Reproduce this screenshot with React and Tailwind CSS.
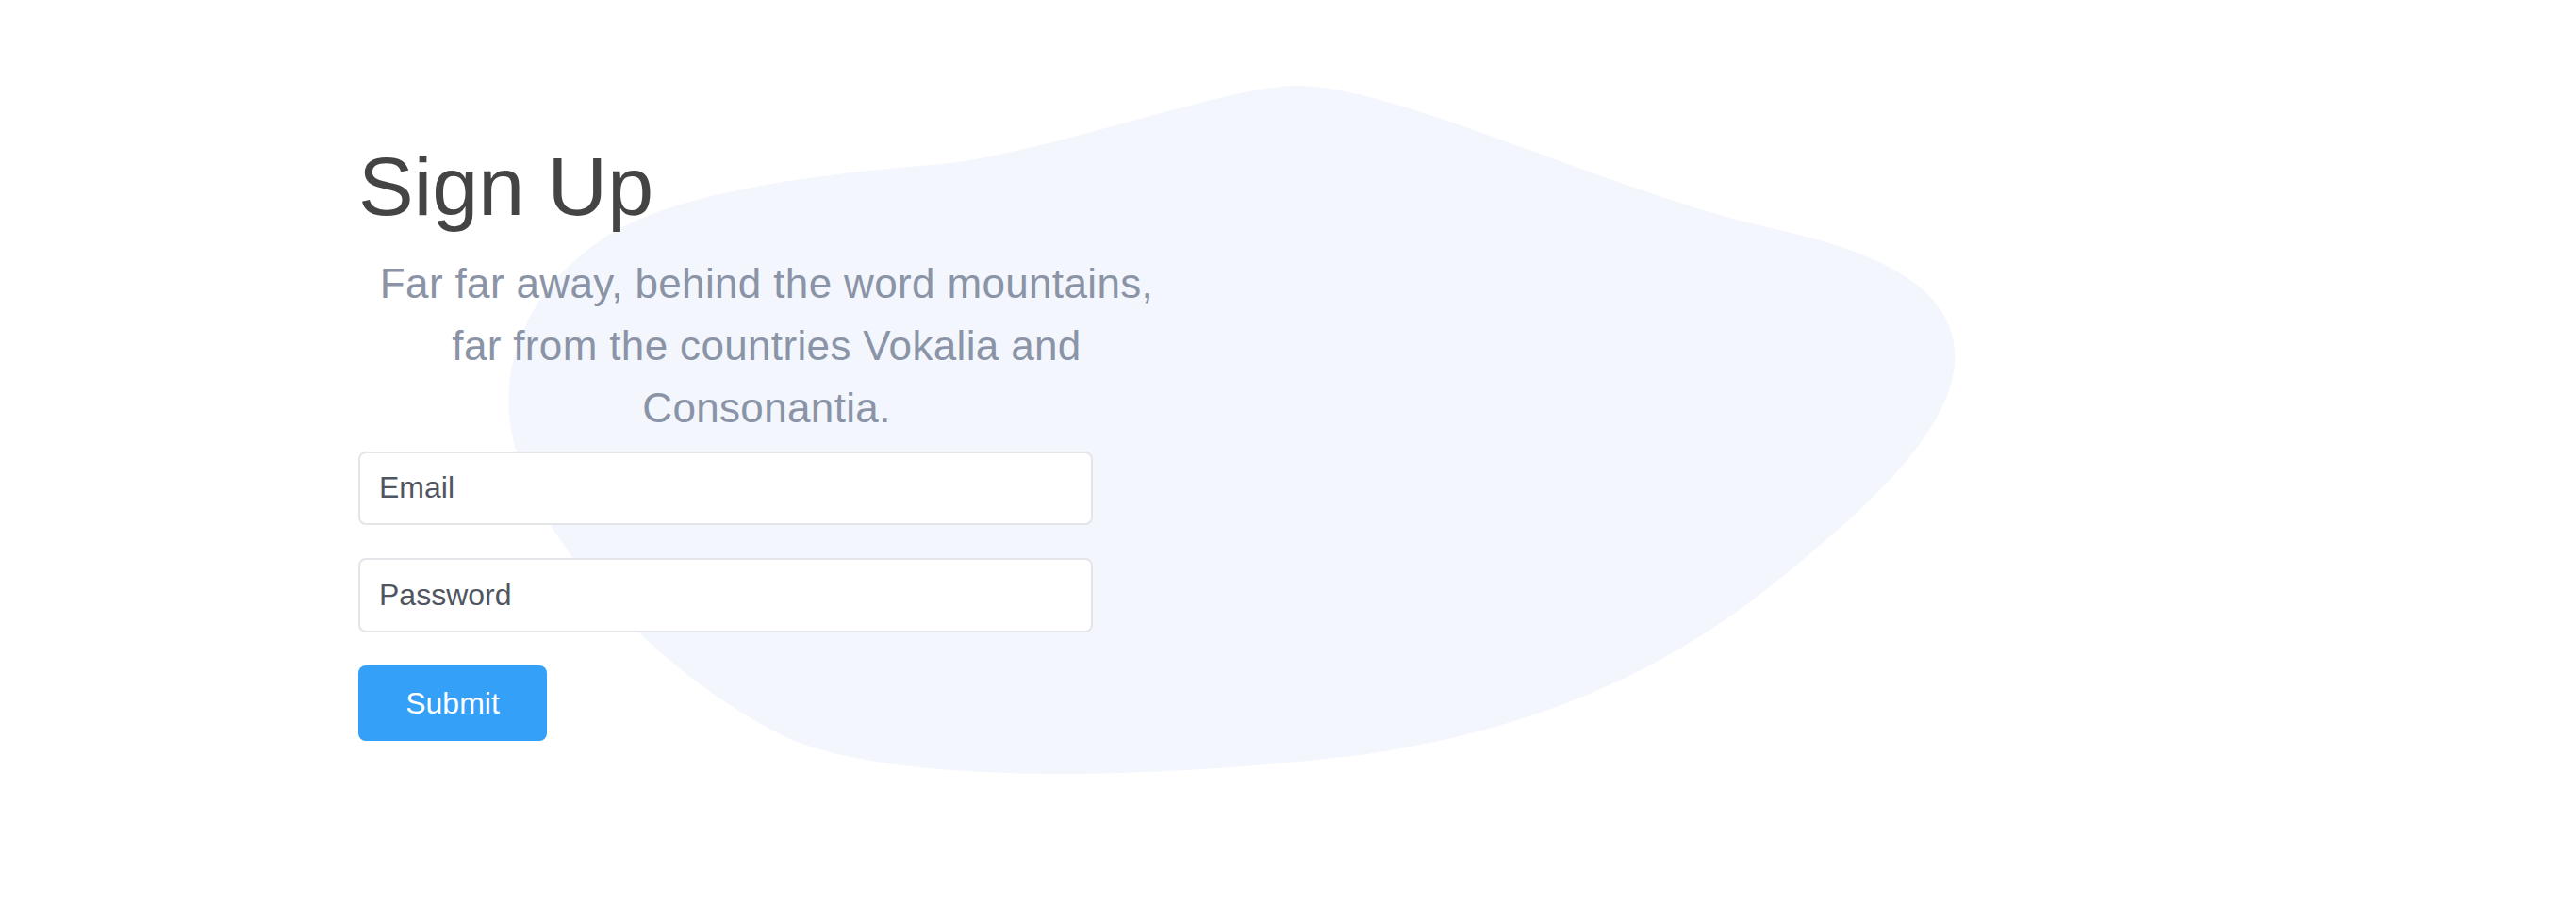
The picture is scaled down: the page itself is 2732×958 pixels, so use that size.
import React from 'react';

const Blob = () => (
  <svg
    className="absolute left-0 top-0 pointer-events-none"
    width="2732"
    height="958"
    viewBox="0 0 2732 958"
    aria-hidden="true"
  >
    <path
      fill="#f3f6fd"
      d="M 1376 91
         C 1300 91, 1120 160, 1000 174
         C 860 185, 700 205, 630 260
         C 560 310, 535 380, 540 440
         C 550 560, 700 720, 840 785
         C 950 830, 1200 830, 1450 800
         C 1650 770, 1780 700, 1880 620
         C 1980 540, 2080 450, 2073 370
         C 2065 290, 1960 260, 1870 240
         C 1700 200, 1480 91, 1376 91 Z"
    />
  </svg>
);

const App = () => {
  return (
    <div className="relative w-full h-[958px] bg-white overflow-hidden font-['Liberation_Sans',Arial,sans-serif]">
      <Blob />

      <div className="relative pl-[380px] pt-[145px]">
        <h1 className="text-[88px] leading-[1.2] text-[#444444] font-normal">Sign Up</h1>

        <p className="mt-[17px] w-[866px] text-center text-[44px] leading-[66px] tracking-[0.35px] text-[#8a94a6]">
          Far far away, behind the word mountains, far from the countries Vokalia and Consonantia.
        </p>

        <form className="mt-[13px] flex flex-col items-start" onSubmit={(e) => e.preventDefault()}>
          <input
            type="email"
            placeholder="Email"
            className="w-[779px] h-[78px] bg-white border-2 border-[#e4e5e9] rounded-lg pl-[20px] text-[32px] text-[#4f5661] placeholder:text-[#4f5661] outline-none"
          />
          <input
            type="password"
            placeholder="Password"
            className="mt-[35px] w-[779px] h-[79px] bg-white border-2 border-[#e4e5e9] rounded-lg pl-[20px] text-[32px] text-[#4f5661] placeholder:text-[#4f5661] outline-none"
          />
          <button
            type="submit"
            className="mt-[35px] w-[200px] h-[80px] bg-[#35a0f8] rounded-lg text-white text-[32px]"
          >
            Submit
          </button>
        </form>
      </div>
    </div>
  );
};

export default App;
